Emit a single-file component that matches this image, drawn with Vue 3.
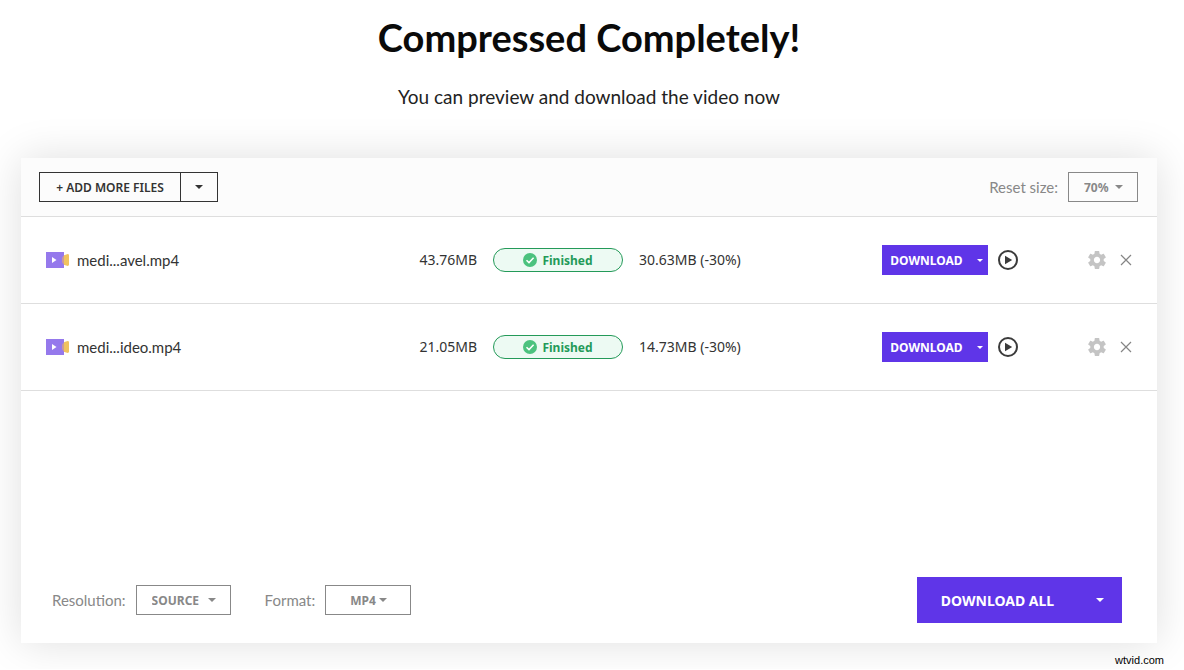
<template>
  <main class="page">
    <header class="heading">
      <h1 class="title">Compressed Completely!</h1>
      <p class="subtitle">You can preview and download the video now</p>
    </header>

    <section class="panel">
      <!-- toolbar -->
      <div class="toolbar">
        <div class="add-group">
          <button type="button" class="add-btn">+ ADD MORE FILES</button>
          <button type="button" class="add-btn add-more" aria-label="More sources">
            <svg class="caret" viewBox="0 0 8 4"><path d="M0 0h8L4 4z" /></svg>
          </button>
        </div>
        <div class="field">
          <label for="size">Reset size:</label>
          <div class="select-box size-box">
            <select id="size" v-model="size">
              <option>50%</option>
              <option>60%</option>
              <option>70%</option>
              <option>80%</option>
            </select>
            <svg class="caret" viewBox="0 0 8 4"><path d="M0 0h8L4 4z" /></svg>
          </div>
        </div>
      </div>

      <!-- file list -->
      <ul class="files">
        <li v-for="file in files" :key="file.name" class="file">
          <div class="file-name">
            <svg class="video-icon" viewBox="0 0 24 16">
              <path d="M16 6q1-3 5-3.800 2-.4 2 1.300v9q0 1.700-2 1.300-4-.8-5-3.800z" fill="#f0c35f" />
              <path d="M0 0h18v16H0z" fill="#9579ec" />
              <path d="M16 6q.6-1.600 2-2.500v9q-1.400-.9-2-2.500z" fill="#c99a9b" />
              <path d="M6 5l4.500 3L6 11z" fill="#fff" />
            </svg>
            <span>{{ file.name }}</span>
          </div>
          <span class="before">{{ file.before }}</span>
          <span class="status">
            <svg class="check" viewBox="0 0 14 14">
              <circle cx="7" cy="7" r="7" fill="#4cc27e" />
              <path d="M3.500 7.200l2.500 2.400 4.600-4.800" fill="none" stroke="#fff" stroke-width="1.500" />
            </svg>
            Finished
          </span>
          <span class="after">{{ file.after }}</span>
          <div class="actions">
            <div class="download-group">
              <button type="button" class="download-btn">DOWNLOAD</button>
              <button type="button" class="download-more" aria-label="Download options">
                <svg class="caret small" viewBox="0 0 8 4"><path d="M0 0h8L4 4z" /></svg>
              </button>
            </div>
            <button type="button" class="icon-btn" aria-label="Preview">
              <svg class="play" viewBox="0 0 20 20">
                <circle cx="10" cy="10" r="9" fill="none" stroke="#3b3b3b" stroke-width="2" />
                <path d="M7 5.800l7.200 4.200L7 14.200z" fill="#3b3b3b" />
              </svg>
            </button>
          </div>
          <div class="tools">
            <button type="button" class="icon-btn" aria-label="Settings">
              <svg class="gear" viewBox="2 2 20 20">
                <path fill="#c4c4c4" d="M19.430 12.980c.04-.32.07-.64.07-.98s-.03-.66-.07-.98l2.110-1.650c.19-.15.24-.42.12-.64l-2-3.460c-.12-.22-.39-.3-.61-.22l-2.490 1c-.52-.4-1.080-.73-1.690-.98l-.38-2.650C14.460 2.180 14.250 2 14 2h-4c-.25 0-.46.18-.49.42l-.38 2.650c-.61.25-1.170.59-1.690.98l-2.490-1c-.23-.09-.49 0-.61.22l-2 3.460c-.13.22-.07.49.12.64l2.110 1.650c-.04.32-.07.65-.07.98s.03.66.07.98l-2.110 1.650c-.19.15-.24.42-.12.64l2 3.460c.12.22.39.3.61.22l2.490-1c.52.4 1.080.73 1.690.98l.38 2.650c.03.24.24.42.49.42h4c.25 0 .46-.18.49-.42l.38-2.650c.61-.25 1.170-.59 1.690-.98l2.490 1c.23.09.49 0 .61-.22l2-3.460c.12-.22.07-.49-.12-.64zM12 15.500c-1.930 0-3.500-1.570-3.500-3.500s1.570-3.500 3.500-3.500 3.500 1.570 3.500 3.500-1.570 3.500-3.500 3.500z" />
              </svg>
            </button>
            <button type="button" class="icon-btn" aria-label="Remove" @click="removeFile(file)">
              <svg class="close" viewBox="0 0 12 12">
                <path d="M1 1l10 10M11 1L1 11" fill="none" stroke="#858585" stroke-width="1.200" />
              </svg>
            </button>
          </div>
        </li>
      </ul>

      <!-- output options -->
      <div class="footer">
        <div class="options">
          <div class="field">
            <label for="resolution">Resolution:</label>
            <div class="select-box resolution-box">
              <select id="resolution" v-model="resolution">
                <option>SOURCE</option>
                <option>1080P</option>
                <option>720P</option>
              </select>
              <svg class="caret" viewBox="0 0 8 4"><path d="M0 0h8L4 4z" /></svg>
            </div>
          </div>
          <div class="field">
            <label for="format">Format:</label>
            <div class="select-box format-box">
              <select id="format" v-model="format">
                <option>MP4</option>
                <option>MOV</option>
                <option>AVI</option>
              </select>
              <svg class="caret" viewBox="0 0 8 4"><path d="M0 0h8L4 4z" /></svg>
            </div>
          </div>
        </div>
        <div class="download-all">
          <button type="button" class="all-btn">DOWNLOAD ALL</button>
          <button type="button" class="all-more" aria-label="Download all options">
            <svg class="caret" viewBox="0 0 8 4"><path d="M0 0h8L4 4z" /></svg>
          </button>
        </div>
      </div>
    </section>

    <footer class="credit">wtvid.com</footer>
  </main>
</template>

<script setup>
import { ref } from 'vue'

const size = ref('70%')
const resolution = ref('SOURCE')
const format = ref('MP4')

const files = ref([
  { name: 'medi...avel.mp4', before: '43.76MB', after: '30.63MB (-30%)' },
  { name: 'medi...ideo.mp4', before: '21.05MB', after: '14.73MB (-30%)' }
])

const removeFile = (file) => {
  files.value = files.value.filter((item) => item !== file)
}
</script>

<style>
body {
  margin: 0;
  background: #fff;
}
</style>

<style scoped>
.page {
  padding-top: 14px;
  overflow: hidden;
  font-family: "Noto Sans", "Open Sans", sans-serif;
  font-size: 14px;
  color: #333;
}

.heading {
  padding: 0 27px 0 21px;
  text-align: center;
}

.title {
  margin: 0;
  font-family: Lato, sans-serif;
  font-size: 38px;
  line-height: 46px;
  font-weight: 700;
  color: #0a0a0a;
}

.subtitle {
  margin: 24px 0 48px;
  font-family: Lato, sans-serif;
  font-size: 19px;
  line-height: 26px;
  color: #222;
}

button,
select {
  font-family: inherit;
  cursor: pointer;
}

.panel {
  margin: 0 27px 0 21px;
  background: #fff;
  box-shadow: 0 0 40px rgba(0, 0, 0, 0.13);
}

.caret {
  width: 8px;
  height: 4px;
  fill: currentColor;
}

.caret.small {
  width: 6px;
  height: 3px;
}

/* toolbar */
.toolbar {
  display: flex;
  align-items: center;
  justify-content: space-between;
  height: 58px;
  padding: 0 19px 0 18px;
  background: #fcfcfc;
  border-bottom: 1px solid #dedede;
}

.add-group {
  display: flex;
}

.add-btn {
  width: 142px;
  height: 30px;
  padding: 0;
  border: 1px solid #333;
  background: transparent;
  font-size: 12px;
  font-weight: 600;
  color: #333;
}

.add-more {
  display: flex;
  align-items: center;
  justify-content: center;
  width: 37px;
  border-left: 0;
}

.field {
  display: flex;
  align-items: center;
  gap: 10px;
  color: #888;
}

.field label {
  font-family: Lato, sans-serif;
  font-size: 15px;
}

.select-box {
  position: relative;
}

.select-box select {
  display: block;
  width: 100%;
  height: 30px;
  padding: 0 0 0 15px;
  border: 1px solid #888;
  border-radius: 0;
  background: transparent;
  appearance: none;
  font-size: 12px;
  font-weight: 700;
  color: #888;
}

.select-box .caret {
  position: absolute;
  top: 13px;
  right: 15px;
  pointer-events: none;
}

.size-box {
  width: 70px;
}

.resolution-box {
  width: 95px;
}

.format-box {
  width: 86px;
}

.format-box select {
  padding-left: 24px;
}

.format-box .caret {
  right: 24px;
}

/* file list */
.files {
  min-height: 340px;
  margin: 0;
  padding: 0;
  list-style: none;
}

.file {
  display: grid;
  grid-template-columns: 335fr 80px 130px 227fr 136px 98px;
  column-gap: 16px;
  align-items: center;
  height: 86px;
  padding: 0 25px;
  border-bottom: 1px solid #dedede;
}

.file-name {
  display: flex;
  align-items: center;
  gap: 7px;
  font-family: Lato, sans-serif;
  font-size: 15px;
}

.video-icon {
  width: 24px;
  height: 16px;
}

.before,
.after {
  padding-bottom: 2px;
}

.before {
  text-align: right;
}

.status {
  display: flex;
  align-items: center;
  justify-content: center;
  gap: 5px;
  box-sizing: border-box;
  height: 24px;
  border: 1px solid #249a59;
  border-radius: 12px;
  background: #edfaf3;
  font-size: 12px;
  font-weight: 700;
  color: #249a59;
}

.check {
  width: 14px;
  height: 14px;
}

.actions {
  display: flex;
  align-items: center;
  justify-content: space-between;
}

.download-group {
  display: flex;
  width: 106px;
  background: #5f35e8;
}

.download-btn,
.download-more {
  height: 30px;
  padding: 0;
  border: 0;
  background: transparent;
  font-size: 12px;
  font-weight: 700;
  color: #fff;
}

.download-btn {
  flex: 1;
}

.download-more {
  display: flex;
  align-items: center;
  justify-content: center;
  width: 17px;
}

.icon-btn {
  display: flex;
  padding: 0;
  border: 0;
  background: transparent;
}

.play {
  width: 20px;
  height: 20px;
}

.tools {
  display: flex;
  align-items: center;
  justify-content: flex-end;
  gap: 14px;
}

.gear {
  width: 18px;
  height: 18px;
}

.close {
  width: 12px;
  height: 12px;
}

/* output options */
.footer {
  display: flex;
  align-items: center;
  justify-content: space-between;
  padding: 20px 35px 20px 31px;
}

.options {
  display: flex;
  gap: 34px;
}

.download-all {
  display: flex;
  width: 205px;
  background: #5f35e8;
}

.all-btn,
.all-more {
  height: 46px;
  padding: 0;
  border: 0;
  background: transparent;
  font-size: 14px;
  font-weight: 700;
  color: #fff;
}

.all-btn {
  flex: 1;
}

.all-more {
  display: flex;
  align-items: center;
  justify-content: center;
  width: 44px;
}

.credit {
  padding: 8px 20px 0 0;
  text-align: right;
  font-family: "Liberation Sans", Arial, sans-serif;
  font-size: 11px;
  line-height: 18px;
  color: #000;
}
</style>
